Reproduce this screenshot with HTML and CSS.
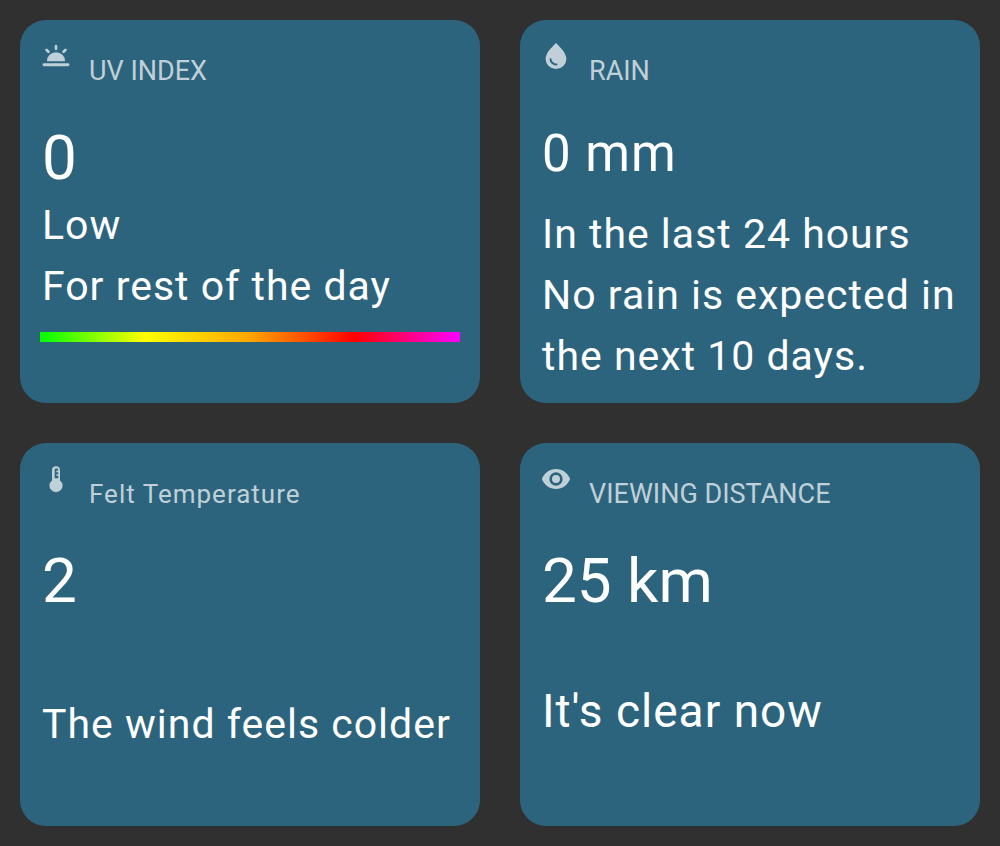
FILE: index.html
```html
<!DOCTYPE html>
<html lang="en">
<head>
<meta charset="utf-8">
<meta name="viewport" content="width=device-width, initial-scale=1">
<title>Weather details</title>
<link rel="stylesheet" href="styles.css">
</head>
<body>
<main class="grid">
  <section class="card">
    <header class="head">
      <svg class="icon" viewBox="0 0 24 24" aria-hidden="true"><path d="M3 17.500h18a1.100 1.100 0 0 1 0 2.200H3a1.100 1.100 0 0 1 0-2.200zM5.200 15.900a6.800 6.800 0 0 1 13.600 0z"/><path class="line" d="M12 4.600v2M4.900 7.400l1.400 1.400M19.100 7.400l-1.400 1.400"/></svg>
      <h2 class="title">UV INDEX</h2>
    </header>
    <p class="value">0</p>
    <p class="text">Low</p>
    <p class="text">For rest of the day</p>
    <div class="scale"></div>
  </section>
  <section class="card">
    <header class="head">
      <svg class="icon" viewBox="0 0 24 24" aria-hidden="true"><path d="M12 2.200C8.500 5.800 4.200 9.800 4.200 14.100a7.800 7.700 0 0 0 15.600 0C19.800 9.800 15.500 5.800 12 2.200z"/><path class="cut" d="M7.900 14.400a4.300 4.300 0 0 0 4.400 4"/></svg>
      <h2 class="title">RAIN</h2>
    </header>
    <p class="value value-compact">0 mm</p>
    <p class="text">In the last 24 hours</p>
    <p class="text">No rain is expected in the next 10 days.</p>
  </section>
  <section class="card">
    <header class="head">
      <svg class="icon" viewBox="0 0 24 24" aria-hidden="true"><path fill-rule="evenodd" d="M15 13.100V5.400a3 3 0 0 0-6 0v7.700a4.900 4.900 0 1 0 6 0zM11 11.500V5.200a1 1 0 0 1 1-1h.800a.9.9 0 0 1 .9.9v.6h-1.400v1.200h1.400v1.500h-1.400v1.200h1.400v1.900z"/></svg>
      <h2 class="title title-wide">Felt Temperature</h2>
    </header>
    <p class="value">2</p>
    <p class="text note">The wind feels colder</p>
  </section>
  <section class="card">
    <header class="head">
      <svg class="icon" viewBox="0 0 24 24" aria-hidden="true"><path d="M12 4.500C7.200 4.500 3.100 7.600 1.400 12c1.700 4.400 5.800 7.500 10.600 7.500s8.900-3.100 10.600-7.500c-1.700-4.400-5.800-7.500-10.600-7.500zM12 17a5 5 0 1 1 0-10 5 5 0 0 1 0 10zm0-8a3 3 0 1 0 0 6 3 3 0 0 0 0-6z"/></svg>
      <h2 class="title">VIEWING DISTANCE</h2>
    </header>
    <p class="value">25 km</p>
    <p class="text note note-large">It's clear now</p>
  </section>
</main>
</body>
</html>
```
FILE: styles.css
```css
* { box-sizing: border-box; }
body {
  margin: 0;
  background: #303030;
  color: #fff;
  font-family: Roboto, sans-serif;
}
.grid {
  display: grid;
  grid-template-columns: 1fr 1fr;
  grid-auto-rows: minmax(383px, auto);
  gap: 40px;
  padding: 20px;
}
.card {
  padding: 20px 20px 16px;
  border-radius: 26px;
  background: #2d647d;
}
.head {
  display: flex;
  gap: 17px;
  height: 84px;
}
.icon {
  width: 32px;
  height: 32px;
  fill: #c0d0d8;
}
.line {
  fill: none;
  stroke: #c0d0d8;
  stroke-width: 2;
  stroke-linecap: round;
}
.cut {
  fill: none;
  stroke: #2d647d;
  stroke-width: 1.5;
  stroke-linecap: round;
}
.title {
  margin: 16px 0 0;
  color: #c0d0d8;
  font-size: 27px;
  line-height: 30px;
  font-weight: 400;
}
.title-wide {
  font-size: 26px;
  letter-spacing: 1px;
}
.value {
  margin: 0 0 3px;
  padding-left: 2px;
  font-size: 62px;
  line-height: 68px;
}
.value-compact {
  margin-bottom: 20px;
  font-size: 51px;
  line-height: 60px;
  letter-spacing: 1px;
}
.text {
  margin: 0;
  padding-left: 2px;
  font-size: 41px;
  line-height: 61px;
  letter-spacing: 1px;
}
.note { padding-top: 76px; }
.note-large {
  padding-top: 63px;
  font-size: 46px;
}
.scale {
  height: 10px;
  margin-top: 15px;
  background: linear-gradient(90deg, #0f0, #ff0, #ffa500, #f00, #f0f);
}
```
